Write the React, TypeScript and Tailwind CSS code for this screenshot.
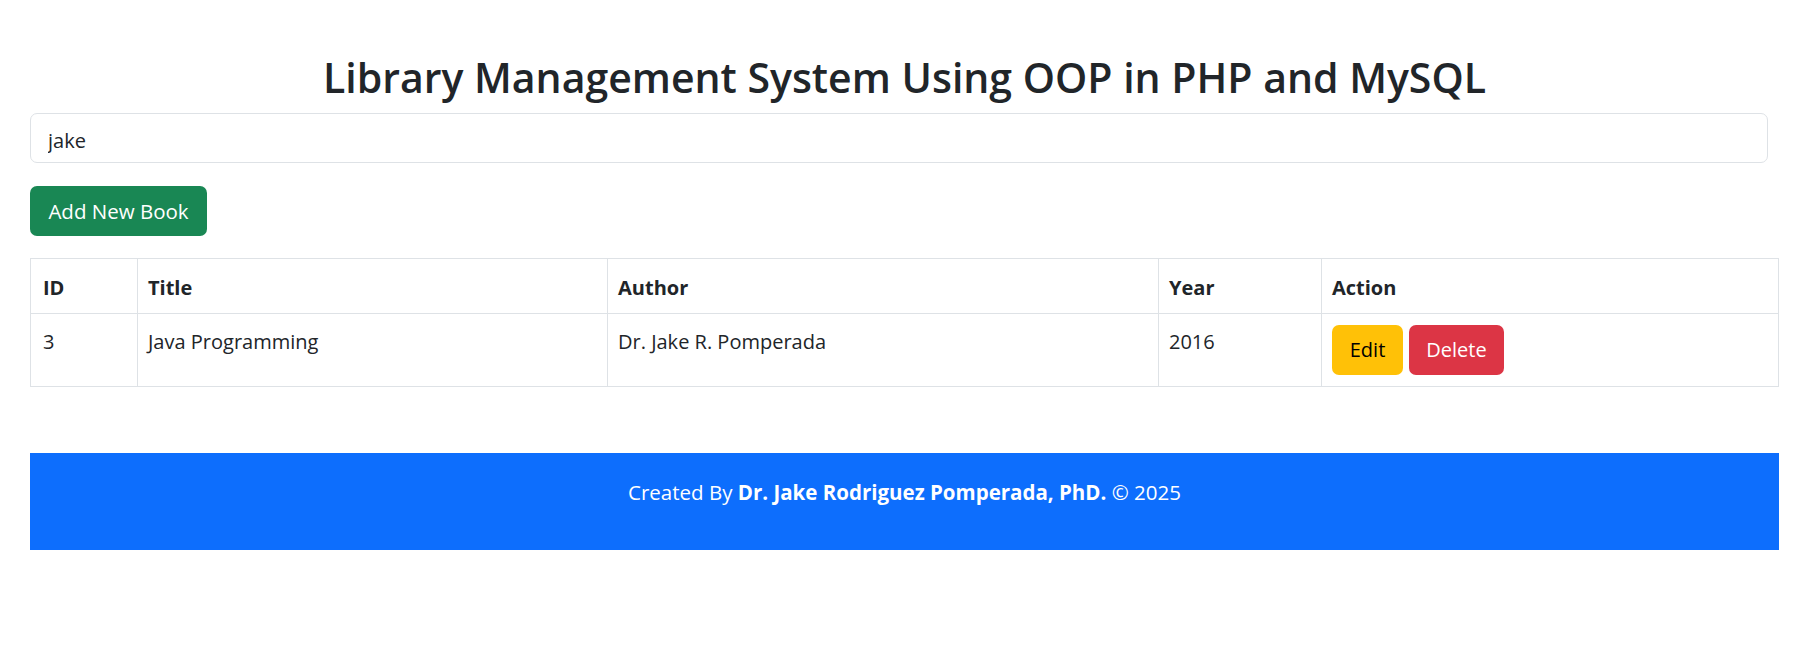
import { useState } from "react";

type Book = { id: number; title: string; author: string; year: number };

const books: Book[] = [
  { id: 3, title: "Java Programming", author: "Dr. Jake R. Pomperada", year: 2016 },
];

export default function App() {
  const [search, setSearch] = useState("jake");

  return (
    <div className="min-h-[655px] bg-white pl-[30px] pr-[37px] font-['Open_Sans',sans-serif] text-[#212529]">
      <h1 className="pt-[47px] pb-[6px] text-center text-[41px] leading-[60px] font-semibold">
        Library Management System Using OOP in PHP and MySQL
      </h1>

      <input
        type="text"
        value={search}
        onChange={(e) => setSearch(e.target.value)}
        className="block h-[50px] w-[1738px] rounded-[7px] border border-[#dee2e6] px-[17px] pt-[4px] text-[20px] text-[#212529] outline-none"
      />

      <button className="mt-[23px] h-[50px] w-[177px] rounded-[7px] bg-[#198754] text-[20.5px] text-white">
        Add New Book
      </button>

      <table className="mt-[22px] w-full border-collapse text-[20px]">
        <thead>
          <tr className="h-[55px]">
            <th className="w-[107px] border border-[#dee2e6] px-[12px] pt-[4px] text-left font-bold">ID</th>
            <th className="w-[470px] border border-[#dee2e6] px-[10px] pt-[4px] text-left font-bold">Title</th>
            <th className="w-[551px] border border-[#dee2e6] px-[10px] pt-[4px] text-left font-bold">Author</th>
            <th className="w-[163px] border border-[#dee2e6] px-[10px] pt-[4px] text-left font-bold">Year</th>
            <th className="border border-[#dee2e6] px-[10px] pt-[4px] text-left font-bold">Action</th>
          </tr>
        </thead>
        <tbody>
          {books.map((b) => (
            <tr key={b.id} className="h-[73px]">
              <td className="border border-[#dee2e6] px-[12px] pt-[13px] align-top">{b.id}</td>
              <td className="border border-[#dee2e6] px-[10px] pt-[13px] align-top">{b.title}</td>
              <td className="border border-[#dee2e6] px-[10px] pt-[13px] align-top">{b.author}</td>
              <td className="border border-[#dee2e6] px-[10px] pt-[13px] align-top">{b.year}</td>
              <td className="border border-[#dee2e6] px-[10px] pt-[11px] align-top">
                <div className="flex gap-[6px]">
                  <button className="h-[50px] w-[71px] rounded-[7px] bg-[#ffc107] text-black">Edit</button>
                  <button className="h-[50px] w-[95px] rounded-[7px] bg-[#dc3545] text-white">Delete</button>
                </div>
              </td>
            </tr>
          ))}
        </tbody>
      </table>

      <footer className="mt-[66px] h-[97px] bg-[#0d6efd] pt-[24px] text-center text-[20.5px] leading-[30px] text-white">
        Created By <span className="font-bold">Dr. Jake Rodriguez Pomperada, PhD.</span> © 2025
      </footer>
    </div>
  );
}
